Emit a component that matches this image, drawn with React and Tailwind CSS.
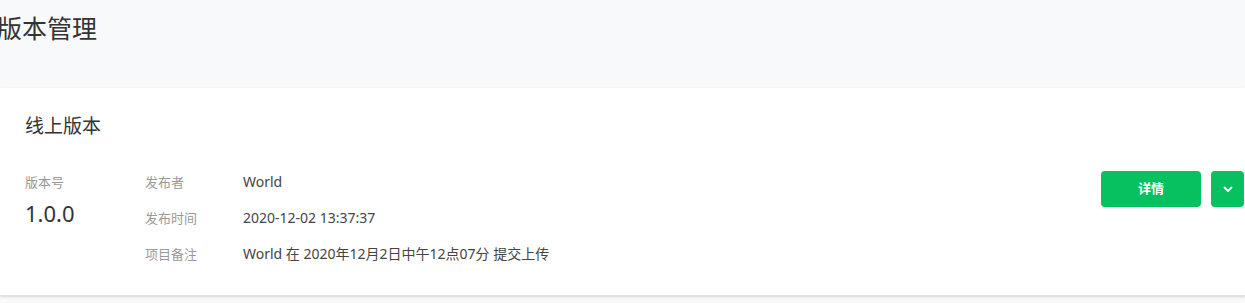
import React from "react";

const FONT = { fontFamily: '"Noto Sans", "Noto Sans CJK SC", sans-serif' };

const rows = [
  { label: "发布者", value: "World" },
  { label: "发布时间", value: "2020-12-02 13:37:37" },
  { label: "项目备注", value: "World 在 2020年12月2日中午12点07分 提交上传" },
];

export default function App() {
  return (
    <div className="w-[1245px] h-[303px] bg-[#f8f9fa] overflow-hidden" style={FONT}>
      {/* page title */}
      <div className="h-[88px] pt-[12px]">
        <h1 className="-ml-[3px] text-[25px] leading-[32px] text-[#333]">版本管理</h1>
      </div>

      {/* online version card */}
      <div className="bg-white h-[208px] border-b border-[#e3e3e3] shadow-sm pl-[25px] pr-[1px]">
        <h2 className="pt-[25px] text-[19px] leading-[26px] text-[#333]">线上版本</h2>

        <div className="flex items-start mt-[32px]">
          <div className="flex flex-1 pt-[1px]">
            <div className="w-[120px]">
              <div className="text-[13px] leading-[20px] text-[#999]">版本号</div>
              <div className="mt-[7px] text-[22px] leading-[28px] text-[#333]">1.0.0</div>
            </div>
            <div className="flex flex-col gap-[16px]">
              {rows.map((r) => (
                <div key={r.label} className="flex leading-[20px]">
                  <span className="w-[98px] text-[13px] text-[#999]">{r.label}</span>
                  <span className="text-[14px] text-[#444]">{r.value}</span>
                </div>
              ))}
            </div>
          </div>

          <div className="flex gap-[10px]">
            <button className="w-[100px] h-[36px] rounded-[4px] bg-[#07c160] text-white text-[13px] font-bold">
              详情
            </button>
            <button className="w-[33px] h-[36px] rounded-[4px] bg-[#07c160] flex items-center justify-center">
              <svg width="12" height="12" viewBox="0 0 12 12" fill="none">
                <path d="M2.5 4.5 L6 8 L9.5 4.5" stroke="white" strokeWidth="1.8" strokeLinecap="round" strokeLinejoin="round" />
              </svg>
            </button>
          </div>
        </div>
      </div>
    </div>
  );
}
